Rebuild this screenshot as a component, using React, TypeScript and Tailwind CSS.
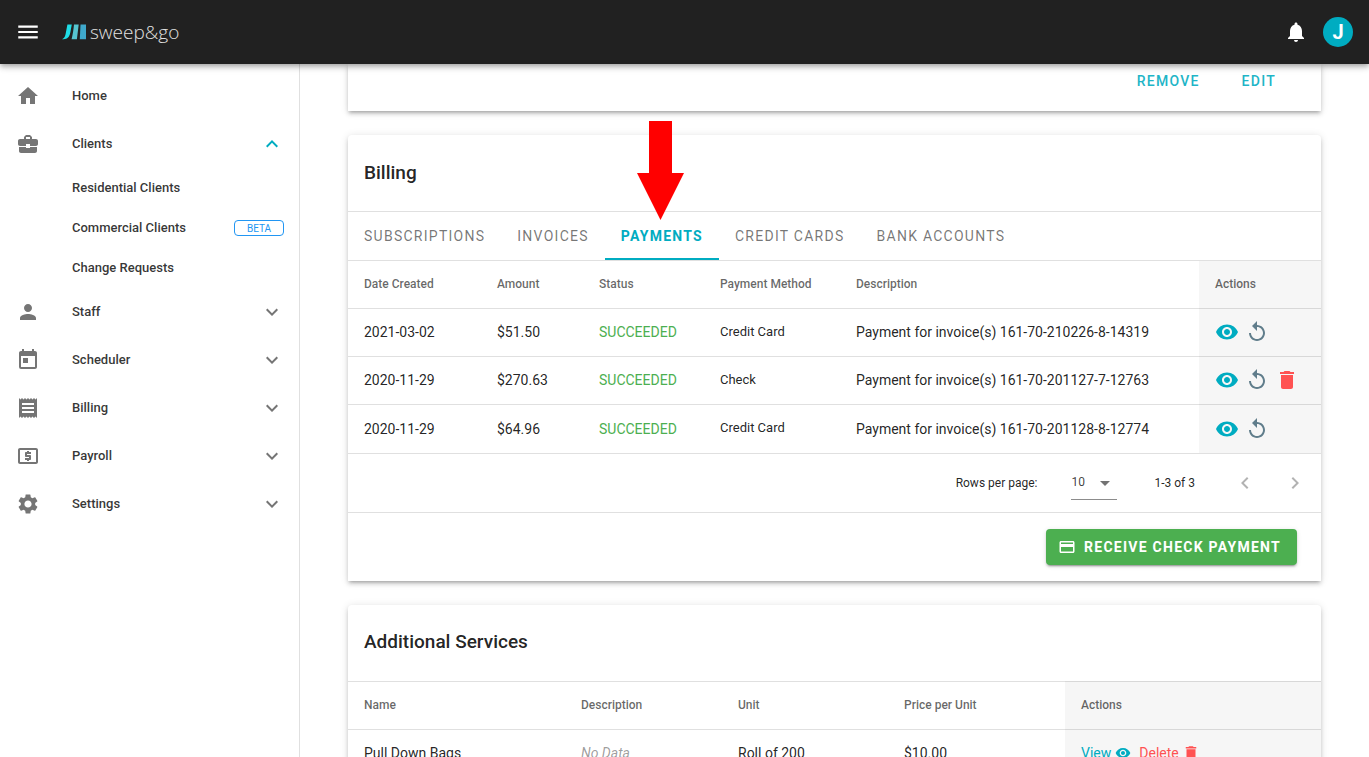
import React, { useState } from "react";
import {
  MdBusinessCenter,
  MdChevronLeft,
  MdChevronRight,
  MdDelete,
  MdExpandLess,
  MdExpandMore,
  MdHome,
  MdLocalAtm,
  MdMenu,
  MdNotifications,
  MdPerson,
  MdReceipt,
  MdReplay,
  MdSettings,
  MdToday,
  MdVisibility,
  MdArrowDropDown,
  MdCreditCard,
} from "react-icons/md";

type NavItem = {
  label: string;
  icon: React.ElementType;
  expandable?: boolean;
  children?: { label: string; beta?: boolean }[];
};

const navItems: NavItem[] = [
  { label: "Home", icon: MdHome },
  {
    label: "Clients",
    icon: MdBusinessCenter,
    expandable: true,
    children: [
      { label: "Residential Clients" },
      { label: "Commercial Clients", beta: true },
      { label: "Change Requests" },
    ],
  },
  { label: "Staff", icon: MdPerson, expandable: true },
  { label: "Scheduler", icon: MdToday, expandable: true },
  { label: "Billing", icon: MdReceipt, expandable: true },
  { label: "Payroll", icon: MdLocalAtm, expandable: true },
  { label: "Settings", icon: MdSettings, expandable: true },
];

const tabs = ["Subscriptions", "Invoices", "Payments", "Credit Cards", "Bank Accounts"];

const payments = [
  { date: "2021-03-02", amount: "$51.50", status: "SUCCEEDED", method: "Credit Card", description: "Payment for invoice(s) 161-70-210226-8-14319" },
  { date: "2020-11-29", amount: "$270.63", status: "SUCCEEDED", method: "Check", description: "Payment for invoice(s) 161-70-201127-7-12763", deletable: true },
  { date: "2020-11-29", amount: "$64.96", status: "SUCCEEDED", method: "Credit Card", description: "Payment for invoice(s) 161-70-201128-8-12774" },
];

const cardClass =
  "bg-white shadow-[0_3px_3px_-2px_rgba(0,0,0,0.2),0_3px_4px_0_rgba(0,0,0,0.14),0_1px_8px_0_rgba(0,0,0,0.12)]";
const titleClass = "flex h-[76px] items-center px-4 text-[19px] font-medium";
const thClass = "px-4 text-left text-xs font-medium text-black/60";

function Logo() {
  return (
    <a href="#" className="flex items-center gap-1" aria-label="sweep&go">
      <svg className="h-4 w-6" viewBox="0 0 24 16" aria-hidden="true">
        <path d="M0 15.200C2.500 14.500 3.200 12 3.800 9L5.400 0.500H9.800L8.300 8.500C7.300 13.200 5.500 15.200 1.500 15.200Z" fill="#1fdde6" />
        <path d="M12 0.500H16.700L14.900 15.200H9.600C10.800 10.500 11.500 5.500 12 0.500Z" fill="#56c5d0" />
        <path d="M18.500 0.500H24V15.200H17.800Z" fill="#3fa9cc" />
      </svg>
      <span className="font-['Open_Sans',sans-serif] text-[19px] leading-6 font-light text-[#e0e0e0]">sweep&amp;go</span>
    </a>
  );
}

function Header() {
  return (
    <header className="relative z-20 flex h-16 shrink-0 items-center justify-between bg-[#212121] pr-4 pl-[15px] shadow-[0_2px_4px_-1px_rgba(0,0,0,0.2),0_4px_5px_0_rgba(0,0,0,0.14),0_1px_10px_0_rgba(0,0,0,0.12)]">
      <div className="flex items-center gap-[21px]">
        <button type="button" aria-label="Menu" className="text-white">
          <MdMenu size={26} />
        </button>
        <Logo />
      </div>
      <div className="flex items-center gap-[15px]">
        <button type="button" aria-label="Notifications" className="text-white">
          <MdNotifications size={24} />
        </button>
        <button type="button" className="h-[30px] w-[30px] rounded-full bg-[#00acc1] text-xl leading-none font-bold text-white">
          J
        </button>
      </div>
    </header>
  );
}

function Sidebar() {
  const [open, setOpen] = useState("Clients");

  return (
    <nav className="w-[300px] shrink-0 border-r border-[#e0e0e0] bg-white pt-2 text-[13px] font-medium text-black/80">
      {navItems.map((item) => {
        const isOpen = open === item.label;
        return (
          <div key={item.label}>
            <button
              type="button"
              onClick={() => item.expandable && setOpen(isOpen ? "" : item.label)}
              className="flex h-12 w-full items-center pr-[15px] pl-4 text-left"
            >
              <item.icon size={24} className="mr-8 text-[#757575]" />
              <span className="grow">{item.label}</span>
              {item.expandable &&
                (isOpen ? (
                  <MdExpandLess size={24} className="text-[#00acc1]" />
                ) : (
                  <MdExpandMore size={24} className="text-[#757575]" />
                ))}
            </button>
            {isOpen &&
              item.children?.map((child) => (
                <a key={child.label} href="#" className="flex h-10 items-center justify-between pr-[15px] pl-[72px]">
                  {child.label}
                  {child.beta && (
                    <span className="flex h-4 w-[50px] items-center justify-center rounded border border-[#2196f3] text-[10px] font-normal text-[#2196f3]">
                      BETA
                    </span>
                  )}
                </a>
              ))}
          </div>
        );
      })}
    </nav>
  );
}

function BillingCard() {
  const [active, setActive] = useState("Payments");

  return (
    <section className={`${cardClass} relative rounded-t`}>
      <h2 className={titleClass}>Billing</h2>

      {/* Pointer to the payments tab */}
      <svg className="absolute top-[-14px] left-[289px] h-[99px] w-[47px]" viewBox="0 0 47 99" fill="#ff0000" aria-hidden="true">
        <path d="M12 0H35V52H47L23.500 99L0 52H12Z" />
      </svg>

      <div role="tablist" className="flex h-[50px] border-y border-black/12">
        {tabs.map((tab) => (
          <button
            key={tab}
            type="button"
            role="tab"
            aria-selected={tab === active}
            onClick={() => setActive(tab)}
            className={
              tab === active
                ? "h-12 border-y-2 border-t-transparent border-b-[#00acc1] px-4 text-sm font-bold tracking-[0.09em] text-[#00acc1] uppercase"
                : "h-12 px-4 text-sm tracking-[0.09em] text-black/55 uppercase"
            }
          >
            {tab}
          </button>
        ))}
      </div>

      <table className="w-full table-fixed text-sm">
        <colgroup>
          <col className="w-[133px]" />
          <col className="w-[102px]" />
          <col className="w-[121px]" />
          <col className="w-[136px]" />
          <col />
          <col className="w-[122px]" />
        </colgroup>
        <thead>
          <tr className="h-[47px] border-b border-black/12">
            <th className={thClass}>Date Created</th>
            <th className={thClass}>Amount</th>
            <th className={thClass}>Status</th>
            <th className={thClass}>Payment Method</th>
            <th className={thClass}>Description</th>
            <th className={`${thClass} bg-[#f6f6f6]`}>Actions</th>
          </tr>
        </thead>
        <tbody>
          {payments.map((row) => (
            <tr key={row.description} className="h-12 border-b border-black/12 last:h-[49px]">
              <td className="px-4">{row.date}</td>
              <td className="px-4">{row.amount}</td>
              <td className="px-4 text-[#4caf50]">{row.status}</td>
              <td className="px-4 text-[13px]">{row.method}</td>
              <td className="px-4">{row.description}</td>
              <td className="bg-[#f6f6f6] px-4">
                <div className="flex gap-1.5">
                  <button type="button" aria-label="View payment" className="text-[#00acc1]">
                    <MdVisibility size={24} />
                  </button>
                  <button type="button" aria-label="Refund payment" className="text-[#607d8b]">
                    <MdReplay size={24} />
                  </button>
                  {row.deletable && (
                    <button type="button" aria-label="Delete payment" className="text-[#ff5252]">
                      <MdDelete size={24} />
                    </button>
                  )}
                </div>
              </td>
            </tr>
          ))}
        </tbody>
      </table>

      <div className="flex h-[59px] items-center justify-end border-b border-black/12 pr-3.5 text-xs">
        <label htmlFor="rows-per-page" className="mr-[34px]">
          Rows per page:
        </label>
        <div className="relative mr-[37px]">
          <select
            id="rows-per-page"
            defaultValue="10"
            className="h-[34px] w-[46px] appearance-none border-b border-black/45 text-black/75 outline-none"
          >
            <option>5</option>
            <option>10</option>
            <option>25</option>
          </select>
          <MdArrowDropDown size={24} className="pointer-events-none absolute top-[5px] right-0 text-black/55" />
        </div>
        <span>1-3 of 3</span>
        <button type="button" disabled aria-label="Previous page" className="ml-[38px] text-black/30">
          <MdChevronLeft size={24} />
        </button>
        <button type="button" disabled aria-label="Next page" className="ml-[26px] text-black/30">
          <MdChevronRight size={24} />
        </button>
      </div>

      <div className="flex justify-end px-6 py-4">
        <button
          type="button"
          className="flex h-9 items-center gap-2 rounded bg-[#4caf50] pr-4 pl-3 text-sm font-bold tracking-[0.09em] text-white uppercase shadow-[0_3px_1px_-2px_rgba(0,0,0,0.2),0_2px_2px_0_rgba(0,0,0,0.14),0_1px_5px_0_rgba(0,0,0,0.12)]"
        >
          <MdCreditCard size={18} />
          Receive Check Payment
        </button>
      </div>
    </section>
  );
}

function ServicesCard() {
  return (
    <section className={`${cardClass} rounded-t`}>
      <h2 className={titleClass}>Additional Services</h2>
      <table className="w-full table-fixed border-t border-black/12 text-sm">
        <colgroup>
          <col className="w-[217px]" />
          <col className="w-[157px]" />
          <col className="w-[166px]" />
          <col className="w-[177px]" />
          <col />
        </colgroup>
        <thead>
          <tr className="h-12 border-b border-black/12">
            <th className={thClass}>Name</th>
            <th className={thClass}>Description</th>
            <th className={thClass}>Unit</th>
            <th className={thClass}>Price per Unit</th>
            <th className={`${thClass} bg-[#f6f6f6]`}>Actions</th>
          </tr>
        </thead>
        <tbody>
          <tr className="h-12 border-b border-black/12">
            <td className="px-4">Pull Down Bags</td>
            <td className="px-4 text-black/40 italic">No Data</td>
            <td className="px-4">Roll of 200</td>
            <td className="px-4">$10.00</td>
            <td className="bg-[#f6f6f6] px-4">
              <div className="flex gap-2">
                <a href="#" className="flex items-center gap-1 text-[#00acc1]">
                  View <MdVisibility size={16} />
                </a>
                <a href="#" className="flex items-center gap-[3px] text-[#ff5252]">
                  Delete <MdDelete size={18} />
                </a>
              </div>
            </td>
          </tr>
        </tbody>
      </table>
    </section>
  );
}

export default function App() {
  return (
    <div className="flex h-screen flex-col overflow-hidden bg-white font-[Roboto,sans-serif] text-black/87">
      <Header />
      <div className="flex min-h-0 grow">
        <Sidebar />
        <main className="flex min-w-0 grow flex-col gap-6 overflow-hidden px-12">
          <section className={`${cardClass} flex h-[47px] shrink-0 items-start justify-end gap-[42px] pt-[7px] pr-[45px] text-sm font-medium text-[#1fb5c7]`}>
            <button type="button" className="tracking-[0.09em] uppercase">Remove</button>
            <button type="button" className="tracking-[0.09em] uppercase">Edit</button>
          </section>
          <BillingCard />
          <ServicesCard />
        </main>
      </div>
    </div>
  );
}
